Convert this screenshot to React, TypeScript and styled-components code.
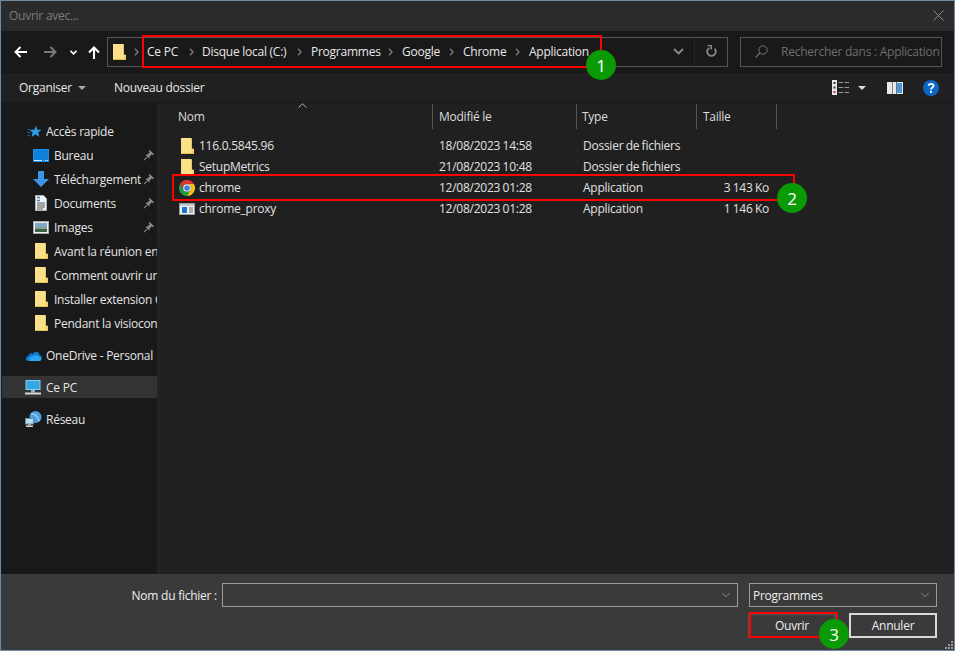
import React from "react";
import styled, { createGlobalStyle } from "styled-components";
import { ChevronDown } from "lucide-react";

const Global = createGlobalStyle`
  html, body { margin: 0; padding: 0; background: #191919; }
  * { box-sizing: border-box; }
  body { font-family: "Open Sans", "Noto Sans", sans-serif; font-size: 12px; }
`;

const Window = styled.div`
  position: relative; width: 955px; height: 651px; overflow: hidden;
  border: 1px solid #6d8aa6; display: flex; flex-direction: column; background: #191919;
  color: #e8e8e8; letter-spacing: -0.25px;
`;
const TitleBar = styled.div`
  height: 30px; flex: none; display: flex; align-items: center; justify-content: space-between;
  padding: 0 10px 2px 8px; background: #2b2b2b; color: #7c7c7c;
`;
const NavBar = styled.div`
  height: 42px; flex: none; display: flex; align-items: center; background: #191919; padding: 0 12px 0 11px;
`;
const NavButton = styled.div<{ $w: number; $ml?: number; $off?: boolean }>`
  width: ${(p) => p.$w}px; margin-left: ${(p) => p.$ml || 0}px; display: flex; justify-content: center; align-items: center;
  color: ${(p) => (p.$off ? "#7a7a7a" : "#fff")};
`;
const Address = styled.div`
  height: 30px; width: 621px; margin-left: 4px; border: 1px solid #555; display: flex; align-items: center;
  padding-left: 5px; margin-top: -1px; background: #191919;
`;
const Crumbs = styled.div`display: flex; align-items: center; flex: 1;`;
const Crumb = styled.span<{ $w: number }>`width: ${(p) => p.$w}px; flex: none; white-space: nowrap; color: #e8e8e8;`;
const Sep = styled.span<{ $w: number }>`
  width: ${(p) => p.$w}px; flex: none; display: flex; justify-content: center; color: #777;
`;
const AddressTools = styled.div`display: flex; align-items: center; height: 100%; color: #8a8a8a;`;
const ToolCell = styled.div<{ $w: number; $line?: boolean }>`
  width: ${(p) => p.$w}px; height: 100%; display: flex; align-items: center; justify-content: center;
  border-left: ${(p) => (p.$line ? "1px solid #262626" : "none")};
`;
const SearchBox = styled.div`
  width: 202px; height: 30px; margin-left: 12px; margin-top: -1px; border: 1px solid #555; display: flex; align-items: center;
  padding-left: 14px; color: #6e6e6e; white-space: nowrap; overflow: hidden; gap: 13px;
`;
const Toolbar = styled.div`
  height: 30px; flex: none; display: flex; align-items: center; background: #202020; border-bottom: 1px solid #191919;
  padding: 0 15px 0 18px; color: #e8e8e8;
`;
const ToolLabel = styled.span<{ $ml?: number }>`
  display: flex; align-items: center; gap: 6px; white-space: nowrap; margin-left: ${(p) => p.$ml || 0}px;
`;
const Caret = styled.span<{ $c?: string }>`
  width: 0; height: 0; border-left: 4px solid transparent; border-right: 4px solid transparent;
  border-top: 4px solid ${(p) => p.$c || "#a8a8a8"}; display: inline-block; margin-top: 1px;
`;
const ToolRight = styled.div`margin-left: auto; display: flex; align-items: center;`;
const ToolIcon = styled.span<{ $ml: number }>`margin-left: ${(p) => p.$ml}px; display: flex;`;
const Main = styled.div`flex: 1; min-height: 0; display: flex;`;
const Sidebar = styled.div`
  width: 156px; flex: none; background: #191919; padding-top: 16px; display: flex; flex-direction: column; color: #e4e4e4;
`;
const Splitter = styled.div`width: 3px; flex: none; background: #232323;`;
const SideRow = styled.div<{ $gap?: number; $left?: number }>`
  height: 24px; flex: none; display: flex; align-items: center; position: relative; white-space: nowrap;
  padding-left: ${(p) => p.$left ?? 24}px; margin-top: ${(p) => p.$gap || 0}px;
`;
const QuickRow = styled(SideRow)`padding-left: 32px;`;
const ActiveRow = styled(SideRow)`
  height: 22px; margin-left: 1px; margin-top: 9px; margin-bottom: 9px; padding-left: 23px; background: #333333;
`;
const SideIcon = styled.span<{ $w: number }>`width: ${(p) => p.$w}px; height: 18px; flex: none; display: flex; align-items: center;`;
const QuickIcon = styled.span`width: 16px; margin-right: 5px; height: 18px; flex: none; display: flex; align-items: center; justify-content: center;`;
const SideLabel = styled.span<{ $clip: number }>`
  display: block; overflow: hidden; white-space: nowrap; max-width: ${(p) => p.$clip}px;
`;
const PinWrap = styled.span`position: absolute; left: 142px; top: 6px; width: 12px; height: 12px; display: flex;`;
const Content = styled.div`flex: 1; min-width: 0; background: #202020; position: relative;`;
const HeaderRow = styled.div`
  height: 25px; display: grid; grid-template-columns: 273px 144px 120px 80px; margin-top: 1px; margin-bottom: 6px; color: #dcdcdc;
`;
const HeaderCell = styled.div<{ $pad: number }>`
  display: flex; align-items: center; padding-left: ${(p) => p.$pad}px; border-right: 1px solid #555;
`;
const SortMark = styled.div`position: absolute; left: 138px; top: 0; color: #b0b0b0; line-height: 0;`;
const FileRow = styled.div`
  height: 21px; display: grid; grid-template-columns: 273px 144px 120px 80px; align-items: center; color: #e0e0e0;
`;
const NameCell = styled.div`display: flex; align-items: center; padding-left: 19px; gap: 4px; white-space: nowrap;`;
const FileIcon = styled.span`width: 16px; height: 16px; flex: none; display: flex; align-items: center; justify-content: center;`;
const Cell = styled.div<{ $right?: boolean }>`
  padding-left: 6px; padding-right: 8px; white-space: nowrap; word-spacing: -0.5px; text-align: ${(p) => (p.$right ? "right" : "left")};
`;
const Footer = styled.div`
  height: 76px; flex: none; background: #3a3a3a; padding: 9px 17px 0 0; display: flex; flex-direction: column; position: relative;
`;
const FieldLine = styled.div`display: flex; align-items: center; height: 24px;`;
const FieldLabel = styled.div`width: 216px; text-align: right; color: #eee; white-space: nowrap;`;
const Input = styled.div`
  width: 516px; height: 24px; margin-left: 5px; border: 1px solid #9a9a9a; display: flex; justify-content: flex-end; align-items: center; padding-right: 4px; color: #aaa;
`;
const Combo = styled.div`
  width: 188px; height: 24px; margin-left: 11px; border: 1px solid #9a9a9a; display: flex; justify-content: space-between; align-items: center; padding: 0 4px 0 3px; color: #eee;
`;
const ButtonLine = styled.div`display: flex; justify-content: flex-end; gap: 13px; margin-top: 6px;`;
const DialogButton = styled.div<{ $default?: boolean }>`
  width: 88px; height: 25px; display: flex; align-items: center; justify-content: center; color: #eee;
  border: 2px solid ${(p) => (p.$default ? "#d8d8d8" : "#555")};
`;
const Grip = styled.div`position: absolute; right: 0; bottom: 0; line-height: 0; color: #9a9a9a;`;
const Mark = styled.div<{ $x: number; $y: number; $w: number; $h: number }>`
  position: absolute; left: ${(p) => p.$x}px; top: ${(p) => p.$y}px; width: ${(p) => p.$w}px; height: ${(p) => p.$h}px;
  border: 2px solid #f00; pointer-events: none;
`;
const Badge = styled.div<{ $x: number; $y: number }>`
  position: absolute; left: ${(p) => p.$x - 15}px; top: ${(p) => p.$y - 15}px; width: 30px; height: 30px; border-radius: 50%;
  background: #0a9a06; color: #fff; display: flex; align-items: center; justify-content: center; font-size: 17px; letter-spacing: 0;
`;

const CloseIcon = () => (
  <svg width="11" height="11" viewBox="0 0 11 11"><path d="M0.5 0.5L10.5 10.5M10.5 0.5L0.5 10.5" stroke="#8a8a8a" strokeWidth="1" /></svg>
);
const BackArrow = () => (
  <svg width="13" height="12" viewBox="0 0 13 12"><path d="M13 6H1.5M6.5 1L1.5 6L6.5 11" fill="none" stroke="currentColor" strokeWidth="1.9" /></svg>
);
const ForwardArrow = () => (
  <svg width="13" height="12" viewBox="0 0 13 12"><path d="M0 6H11.5M6.5 1L11.5 6L6.5 11" fill="none" stroke="currentColor" strokeWidth="1.9" /></svg>
);
const UpArrow = () => (
  <svg width="12" height="13" viewBox="0 0 12 13"><path d="M6 13V1.5M1 6.5L6 1.5L11 6.5" fill="none" stroke="currentColor" strokeWidth="2.1" /></svg>
);
const SmallDown = () => (
  <svg width="7" height="5" viewBox="0 0 7 5"><path d="M0.5 0.8L3.5 3.8L6.5 0.8" fill="none" stroke="currentColor" strokeWidth="1.6" /></svg>
);
const WideDown = () => (
  <svg width="11" height="7" viewBox="0 0 11 7"><path d="M1 1L5.5 5.5L10 1" fill="none" stroke="currentColor" strokeWidth="1.9" /></svg>
);
const Refresh = () => (
  <svg width="11" height="13" viewBox="0 0 11 13">
    <path d="M3.2 2.9A4.3 4.3 0 1 0 8.6 3.6" fill="none" stroke="currentColor" strokeWidth="1.8" />
    <path d="M1.5 0.6H5.2V4.4" fill="none" stroke="currentColor" strokeWidth="1.5" />
  </svg>
);
const Lens = () => (
  <svg width="13" height="13" viewBox="0 0 13 13">
    <circle cx="8" cy="5" r="4.2" fill="none" stroke="#747474" strokeWidth="1" />
    <path d="M5 8L0.6 12.4" stroke="#747474" strokeWidth="1.1" />
  </svg>
);
const Folder = () => (
  <svg width="13" height="16" viewBox="0 0 13 16">
    <path d="M0 0H10.5V11H13V16H0Z" fill="#fbe08a" />
    <path d="M0 15H13V16H0Z" fill="#e8bd50" />
    <path d="M10.5 0.5V11H12.5" fill="none" stroke="#e8c565" strokeWidth="1" />
    <path d="M11 11.5H13V15H11Z" fill="#f7cf66" />
  </svg>
);
const Chev = () => (
  <svg width="5" height="8" viewBox="0 0 5 8"><path d="M1 0.8L4 4L1 7.2" fill="none" stroke="currentColor" strokeWidth="1.5" /></svg>
);
const Pin = () => (
  <svg width="12" height="12" viewBox="0 0 14 14">
    <path d="M7.5 1L13 6.2L11.6 7L9.8 6.5L7.6 9.2L7.4 11.5L2.8 6.8L5.2 6.4L7.7 4.2L7 2.5Z" fill="#8b8b8b" />
    <path d="M4.5 9.5L1.2 13" stroke="#8b8b8b" strokeWidth="1.2" />
  </svg>
);
const Star = () => (
  <svg width="15" height="13" viewBox="0 0 16 14">
    <path d="M9.5 0.5L11 5H15.5L12 8L13.2 13L9 10L4.8 13L6 8L2.5 5H7.8Z" fill="#2f9ae8" />
    <path d="M0.5 5H3M0 8H3.5M0.5 11H3" stroke="#1d6fb0" strokeWidth="1" />
  </svg>
);
const Desktop = () => (
  <svg width="16" height="13" viewBox="0 0 16 13">
    <rect x="0" y="0" width="16" height="13" fill="#1e8fe8" />
    <rect x="1" y="1" width="14" height="10" fill="#0f7fdc" />
    <path d="M1 11.5H15" stroke="#cfe8ff" strokeWidth="1" strokeDasharray="8 3 1 1 1 1" />
  </svg>
);
const Download = () => (
  <svg width="16" height="16" viewBox="0 0 16 16"><path d="M5 0H11V8H16L8 16L0 8H5Z" fill="#3a96e6" /></svg>
);
const Doc = () => (
  <svg width="12" height="16" viewBox="0 0 12 16">
    <path d="M0.5 0.5H8.5L11.5 3.5V15.5H0.5Z" fill="#f2f2f2" stroke="#b0b0b0" />
    <path d="M2 2.5H5M2 5.5H5" stroke="#3b82c4" strokeWidth="1.4" />
    <path d="M2 8H10M2 10H10M2 12H10M2 14H8" stroke="#555" strokeWidth="1" />
  </svg>
);
const Picture = () => (
  <svg width="16" height="13" viewBox="0 0 16 13">
    <rect x="0.5" y="0.5" width="15" height="12" fill="#eee" stroke="#aaa" />
    <rect x="2" y="2" width="12" height="4" fill="#7aa9cc" />
    <rect x="2" y="6" width="12" height="2" fill="#8ba28a" />
    <rect x="2" y="8" width="12" height="3" fill="#3d5f48" />
  </svg>
);
const Cloud = () => (
  <svg width="17" height="11" viewBox="0 0 17 11">
    <path d="M3 11C0 11 0 6.5 3 6.2C4 3 7 2.5 8 4C9 1 14 1 14.5 5C17.5 5.5 17.5 11 14 11Z" fill="#0f78d4" />
    <path d="M5 11C3 9 5 6 7.5 6.2C9 4.5 14 5 14.5 7C17 7.2 17 11 14 11Z" fill="#2aa4ef" />
  </svg>
);
const Monitor = () => (
  <svg width="16" height="15" viewBox="0 0 16 15">
    <rect x="0.5" y="0" width="15" height="10" fill="#7fd0f5" />
    <rect x="1.5" y="1" width="13" height="8" fill="#38a6e6" />
    <rect x="6" y="10" width="4" height="2.5" fill="#8fb8cf" />
    <rect x="0" y="12.5" width="16" height="2" fill="#cfd8dd" />
  </svg>
);
const Network = () => (
  <svg width="17" height="16" viewBox="0 0 17 16">
    <circle cx="10.5" cy="6" r="6" fill="#4aa0de" />
    <path d="M6 3C9 2 13 5 14 10" stroke="#a7d8f5" strokeWidth="1.2" fill="none" />
    <rect x="0.5" y="7.5" width="8" height="5.5" fill="#b8dcf2" stroke="#6d8da3" />
    <rect x="3" y="13" width="3" height="1.5" fill="#9ab" />
    <rect x="1" y="14.5" width="7" height="1.5" fill="#cfd8dd" />
  </svg>
);
const Chrome = () => (
  <svg width="16" height="16" viewBox="0 0 48 48">
    <path d="M3.2 12A24 24 0 0 1 44.8 12H24A12 12 0 0 0 13.6 30Z" fill="#d9372c" />
    <path d="M3.2 12L13.6 30A12 12 0 0 0 34.4 30L24 48A24 24 0 0 1 3.2 12Z" fill="#1f9d3f" />
    <path d="M44.8 12H24A12 12 0 0 1 34.4 30L24 48A24 24 0 0 0 44.8 12Z" fill="#f6c013" />
    <circle cx="24" cy="24" r="11.5" fill="#fff" />
    <circle cx="24" cy="24" r="8.5" fill="#3f7fe8" />
  </svg>
);
const ExeIcon = () => (
  <svg width="16" height="12" viewBox="0 0 16 12">
    <rect x="0.5" y="0.5" width="15" height="11" fill="#f2f2f2" stroke="#9a9a9a" />
    <rect x="1" y="1" width="14" height="2" fill="#c8c8c8" />
    <rect x="3" y="4" width="5" height="6" fill="#1677d2" />
    <path d="M10 5H14M10 7H14M10 9H14" stroke="#666" strokeWidth="1" />
  </svg>
);
const ViewIcon = () => (
  <svg width="17" height="15" viewBox="0 0 17 15">
    <rect x="0" y="0" width="5" height="15" fill="#e8e8e8" />
    <rect x="1.5" y="2" width="2" height="2" fill="#333" />
    <rect x="1.5" y="6.5" width="2" height="2" fill="#333" />
    <rect x="1.5" y="11" width="2" height="2" fill="#c33" />
    <path d="M6.5 2.5H11M12.5 2.5H17M6.5 7.5H11M12.5 7.5H17M6.5 12.5H11M12.5 12.5H17" stroke="#9a9a9a" strokeWidth="1" />
  </svg>
);
const PaneIcon = () => (
  <svg width="16" height="12" viewBox="0 0 16 12">
    <rect width="16" height="12" fill="#e8e8e8" />
    <rect x="5" y="0" width="1" height="12" fill="#888" />
    <rect x="10" y="1" width="5" height="10" fill="#4a97e0" />
    <rect x="9" y="0" width="1" height="12" fill="#777" />
  </svg>
);
const Help = () => (
  <svg width="16" height="16" viewBox="0 0 16 16">
    <circle cx="8" cy="8" r="8" fill="#0b66c8" />
    <path d="M5.6 5.8C5.8 3.2 10.6 3.2 10.6 5.8C10.6 7.6 8 7.6 8 9.6" fill="none" stroke="#fff" strokeWidth="1.8" />
    <rect x="7" y="10.8" width="2" height="2" fill="#fff" />
  </svg>
);
const GripIcon = () => (
  <svg width="9" height="9" viewBox="0 0 9 9" fill="currentColor">
    <rect x="6" y="0" width="2" height="2" /><rect x="3" y="3" width="2" height="2" /><rect x="6" y="3" width="2" height="2" />
    <rect x="0" y="6" width="2" height="2" /><rect x="3" y="6" width="2" height="2" /><rect x="6" y="6" width="2" height="2" />
  </svg>
);

const crumbs: [string, number][] = [["Ce PC", 33], ["Disque local (C:)", 86], ["Programmes", 68], ["Google", 38], ["Chrome", 43], ["Application", 66]];

const quick = [
  { icon: <Desktop />, label: "Bureau", pin: true },
  { icon: <Download />, label: "Téléchargements", pin: true },
  { icon: <Doc />, label: "Documents", pin: true },
  { icon: <Picture />, label: "Images", pin: true },
  { icon: <Folder />, label: "Avant la réunion en ligne", pin: false },
  { icon: <Folder />, label: "Comment ouvrir une page", pin: false },
  { icon: <Folder />, label: "Installer extension Chrome", pin: false },
  { icon: <Folder />, label: "Pendant la visioconférence", pin: false },
];

const files = [
  { icon: <Folder />, name: "116.0.5845.96", date: "18/08/2023 14:58", type: "Dossier de fichiers", size: "" },
  { icon: <Folder />, name: "SetupMetrics", date: "21/08/2023 10:48", type: "Dossier de fichiers", size: "" },
  { icon: <Chrome />, name: "chrome", date: "12/08/2023 01:28", type: "Application", size: "3 143 Ko" },
  { icon: <ExeIcon />, name: "chrome_proxy", date: "12/08/2023 01:28", type: "Application", size: "1 146 Ko" },
];

export default function App() {
  return (
    <>
      <Global />
      <Window>
        <TitleBar>
          <span>Ouvrir avec...</span>
          <CloseIcon />
        </TitleBar>
        <NavBar>
          <NavButton $w={16}><BackArrow /></NavButton>
          <NavButton $w={24} $ml={10} $off><ForwardArrow /></NavButton>
          <NavButton $w={23}><SmallDown /></NavButton>
          <NavButton $w={18}><UpArrow /></NavButton>
          <Address>
            <Folder />
            <Sep $w={21}><Chev /></Sep>
            <Crumbs>
              {crumbs.map(([c, w], i) => (
                <React.Fragment key={c}>
                  <Crumb $w={w}>{c}</Crumb>
                  {i < crumbs.length - 1 && <Sep $w={i === 0 ? 22 : 23}><Chev /></Sep>}
                </React.Fragment>
              ))}
            </Crumbs>
            <AddressTools>
              <ToolCell $w={32}><WideDown /></ToolCell>
              <ToolCell $w={33} $line><Refresh /></ToolCell>
            </AddressTools>
          </Address>
          <SearchBox>
            <Lens />
            <span>Rechercher dans : Application</span>
          </SearchBox>
        </NavBar>
        <Toolbar>
          <ToolLabel>Organiser <Caret /></ToolLabel>
          <ToolLabel $ml={28}>Nouveau dossier</ToolLabel>
          <ToolRight>
            <ViewIcon />
            <ToolIcon $ml={9}><Caret $c="#ddd" /></ToolIcon>
            <ToolIcon $ml={21}><PaneIcon /></ToolIcon>
            <ToolIcon $ml={20}><Help /></ToolIcon>
          </ToolRight>
        </Toolbar>
        <Main>
          <Sidebar>
            <SideRow $left={26}>
              <SideIcon $w={19}><Star /></SideIcon>
              <SideLabel $clip={100}>Accès rapide</SideLabel>
            </SideRow>
            {quick.map((q) => (
              <QuickRow key={q.label}>
                <QuickIcon>{q.icon}</QuickIcon>
                <SideLabel $clip={q.pin ? 87 : 103}>{q.label}</SideLabel>
                {q.pin && <PinWrap><Pin /></PinWrap>}
              </QuickRow>
            ))}
            <SideRow $gap={8}>
              <SideIcon $w={21}><Cloud /></SideIcon>
              <SideLabel $clip={110}>OneDrive - Personal</SideLabel>
            </SideRow>
            <ActiveRow>
              <SideIcon $w={21}><Monitor /></SideIcon>
              <SideLabel $clip={110}>Ce PC</SideLabel>
            </ActiveRow>
            <SideRow>
              <SideIcon $w={21}><Network /></SideIcon>
              <SideLabel $clip={110}>Réseau</SideLabel>
            </SideRow>
          </Sidebar>
          <Splitter />
          <Content>
            <SortMark>
              <svg width="9" height="5" viewBox="0 0 9 5"><path d="M0.5 4.5L4.5 0.8L8.5 4.5" fill="none" stroke="currentColor" /></svg>
            </SortMark>
            <HeaderRow>
              <HeaderCell $pad={18}>Nom</HeaderCell>
              <HeaderCell $pad={6}>Modifié le</HeaderCell>
              <HeaderCell $pad={5}>Type</HeaderCell>
              <HeaderCell $pad={6}>Taille</HeaderCell>
            </HeaderRow>
            {files.map((f) => (
              <FileRow key={f.name}>
                <NameCell><FileIcon>{f.icon}</FileIcon><span>{f.name}</span></NameCell>
                <Cell>{f.date}</Cell>
                <Cell>{f.type}</Cell>
                <Cell $right>{f.size}</Cell>
              </FileRow>
            ))}
          </Content>
        </Main>
        <Footer>
          <FieldLine>
            <FieldLabel>Nom du fichier :</FieldLabel>
            <Input><ChevronDown size={14} strokeWidth={1.2} /></Input>
            <Combo>Programmes<ChevronDown size={14} strokeWidth={1.2} color="#aaa" /></Combo>
          </FieldLine>
          <ButtonLine>
            <DialogButton>Ouvrir</DialogButton>
            <DialogButton $default>Annuler</DialogButton>
          </ButtonLine>
          <Grip><GripIcon /></Grip>
        </Footer>
        <Mark $x={141} $y={34} $w={460} $h={33} />
        <Badge $x={600} $y={64}>1</Badge>
        <Mark $x={171} $y={173} $w={623} $h={27} />
        <Badge $x={791} $y={197}>2</Badge>
        <Mark $x={748} $y={611} $w={89} $h={26} />
        <Badge $x={833} $y={633}>3</Badge>
      </Window>
    </>
  );
}
